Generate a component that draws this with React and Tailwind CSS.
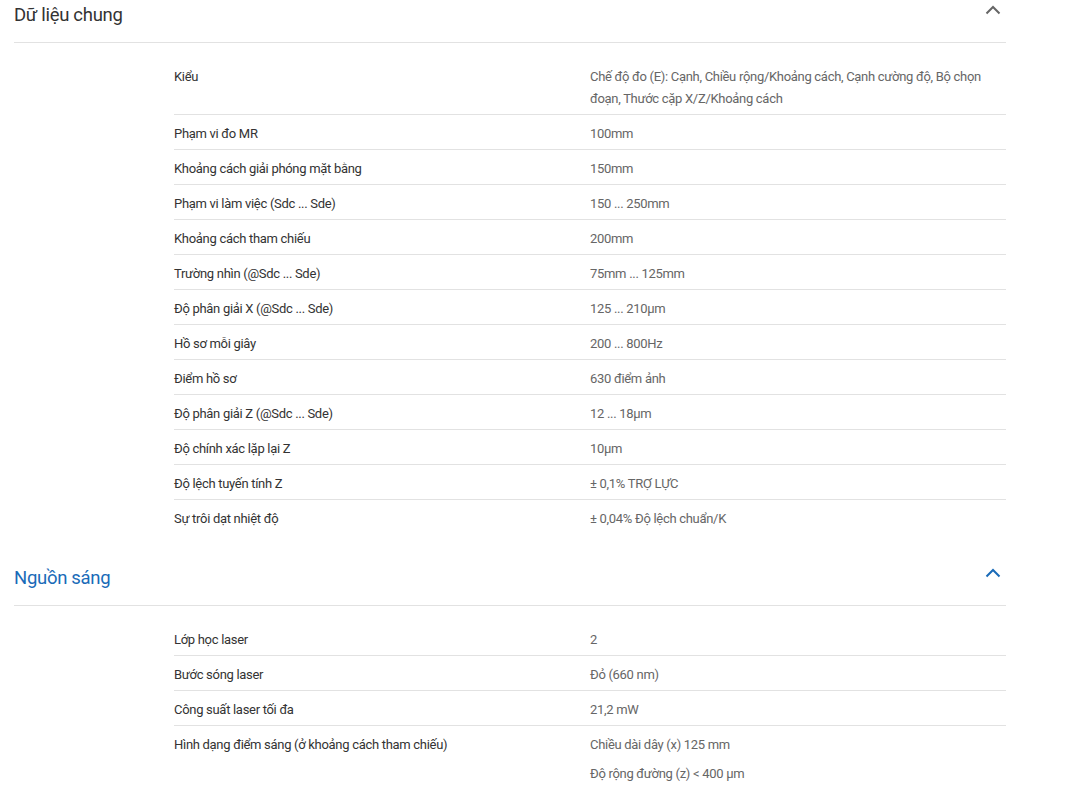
import React from "react";

const general = [
  ["Kiểu", ["Chế độ đo (E): Cạnh, Chiều rộng/Khoảng cách, Cạnh cường độ, Bộ chọn đoạn, Thước cặp X/Z/Khoảng cách"]],
  ["Phạm vi đo MR", ["100mm"]],
  ["Khoảng cách giải phóng mặt bằng", ["150mm"]],
  ["Phạm vi làm việc (Sdc ... Sde)", ["150 ... 250mm"]],
  ["Khoảng cách tham chiếu", ["200mm"]],
  ["Trường nhìn (@Sdc ... Sde)", ["75mm ... 125mm"]],
  ["Độ phân giải X (@Sdc ... Sde)", ["125 ... 210µm"]],
  ["Hồ sơ mỗi giây", ["200 ... 800Hz"]],
  ["Điểm hồ sơ", ["630 điểm ảnh"]],
  ["Độ phân giải Z (@Sdc ... Sde)", ["12 ... 18µm"]],
  ["Độ chính xác lặp lại Z", ["10µm"]],
  ["Độ lệch tuyến tính Z", ["± 0,1% TRỢ LỰC"]],
  ["Sự trôi dạt nhiệt độ", ["± 0,04% Độ lệch chuẩn/K"]],
];

const light = [
  ["Lớp học laser", ["2"]],
  ["Bước sóng laser", ["Đỏ (660 nm)"]],
  ["Công suất laser tối đa", ["21,2 mW"]],
  ["Hình dạng điểm sáng (ở khoảng cách tham chiếu)", ["Chiều dài dây (x) 125 mm", "Độ rộng đường (z) < 400 µm"]],
];

function Chevron({ blue }) {
  return (
    <svg width="16" height="10" viewBox="0 0 16 10" fill="none" className="mt-[5px]">
      <path d="M1.5 8.5 L8 2 L14.5 8.5" stroke={blue ? "#1a6bb8" : "#666666"} strokeWidth="2" />
    </svg>
  );
}

function Section({ title, rows, blue }) {
  return (
    <section>
      <div className="flex items-start justify-between h-[43px] border-b border-[#e2e2e2] pr-[5px]">
        <h2 className={`text-[18.5px] leading-[30px] tracking-[-0.3px] ${blue ? "text-[#1a6bb8]" : "text-[#333333]"}`}>{title}</h2>
        <Chevron blue={blue} />
      </div>
      <div className="ml-[160px] pt-[15px] pb-[29px]">
        {rows.map(([label, vals], i) => (
          <div
            key={label}
            className={`flex pt-[8px] pb-[4px] ${i < rows.length - 1 ? "border-b border-[#e2e2e2]" : ""}`}
          >
            <div className="w-[416px] text-[#333333]">{label}</div>
            <div className="flex-1 text-[#666666] pr-[20px]">
              {vals.map((v, j) => (
                <p key={j} className={j > 0 ? "mt-[7px]" : ""}>{v}</p>
              ))}
            </div>
          </div>
        ))}
      </div>
    </section>
  );
}

export default function App() {
  return (
    <div className="bg-white min-h-screen w-full" style={{ fontFamily: "Roboto, 'Noto Sans', sans-serif" }}>
      <div className="ml-[14px] w-[992px] text-[13px] leading-[22px] tracking-[-0.3px]">
        <Section title="Dữ liệu chung" rows={general} />
        <Section title="Nguồn sáng" rows={light} blue />
      </div>
    </div>
  );
}
